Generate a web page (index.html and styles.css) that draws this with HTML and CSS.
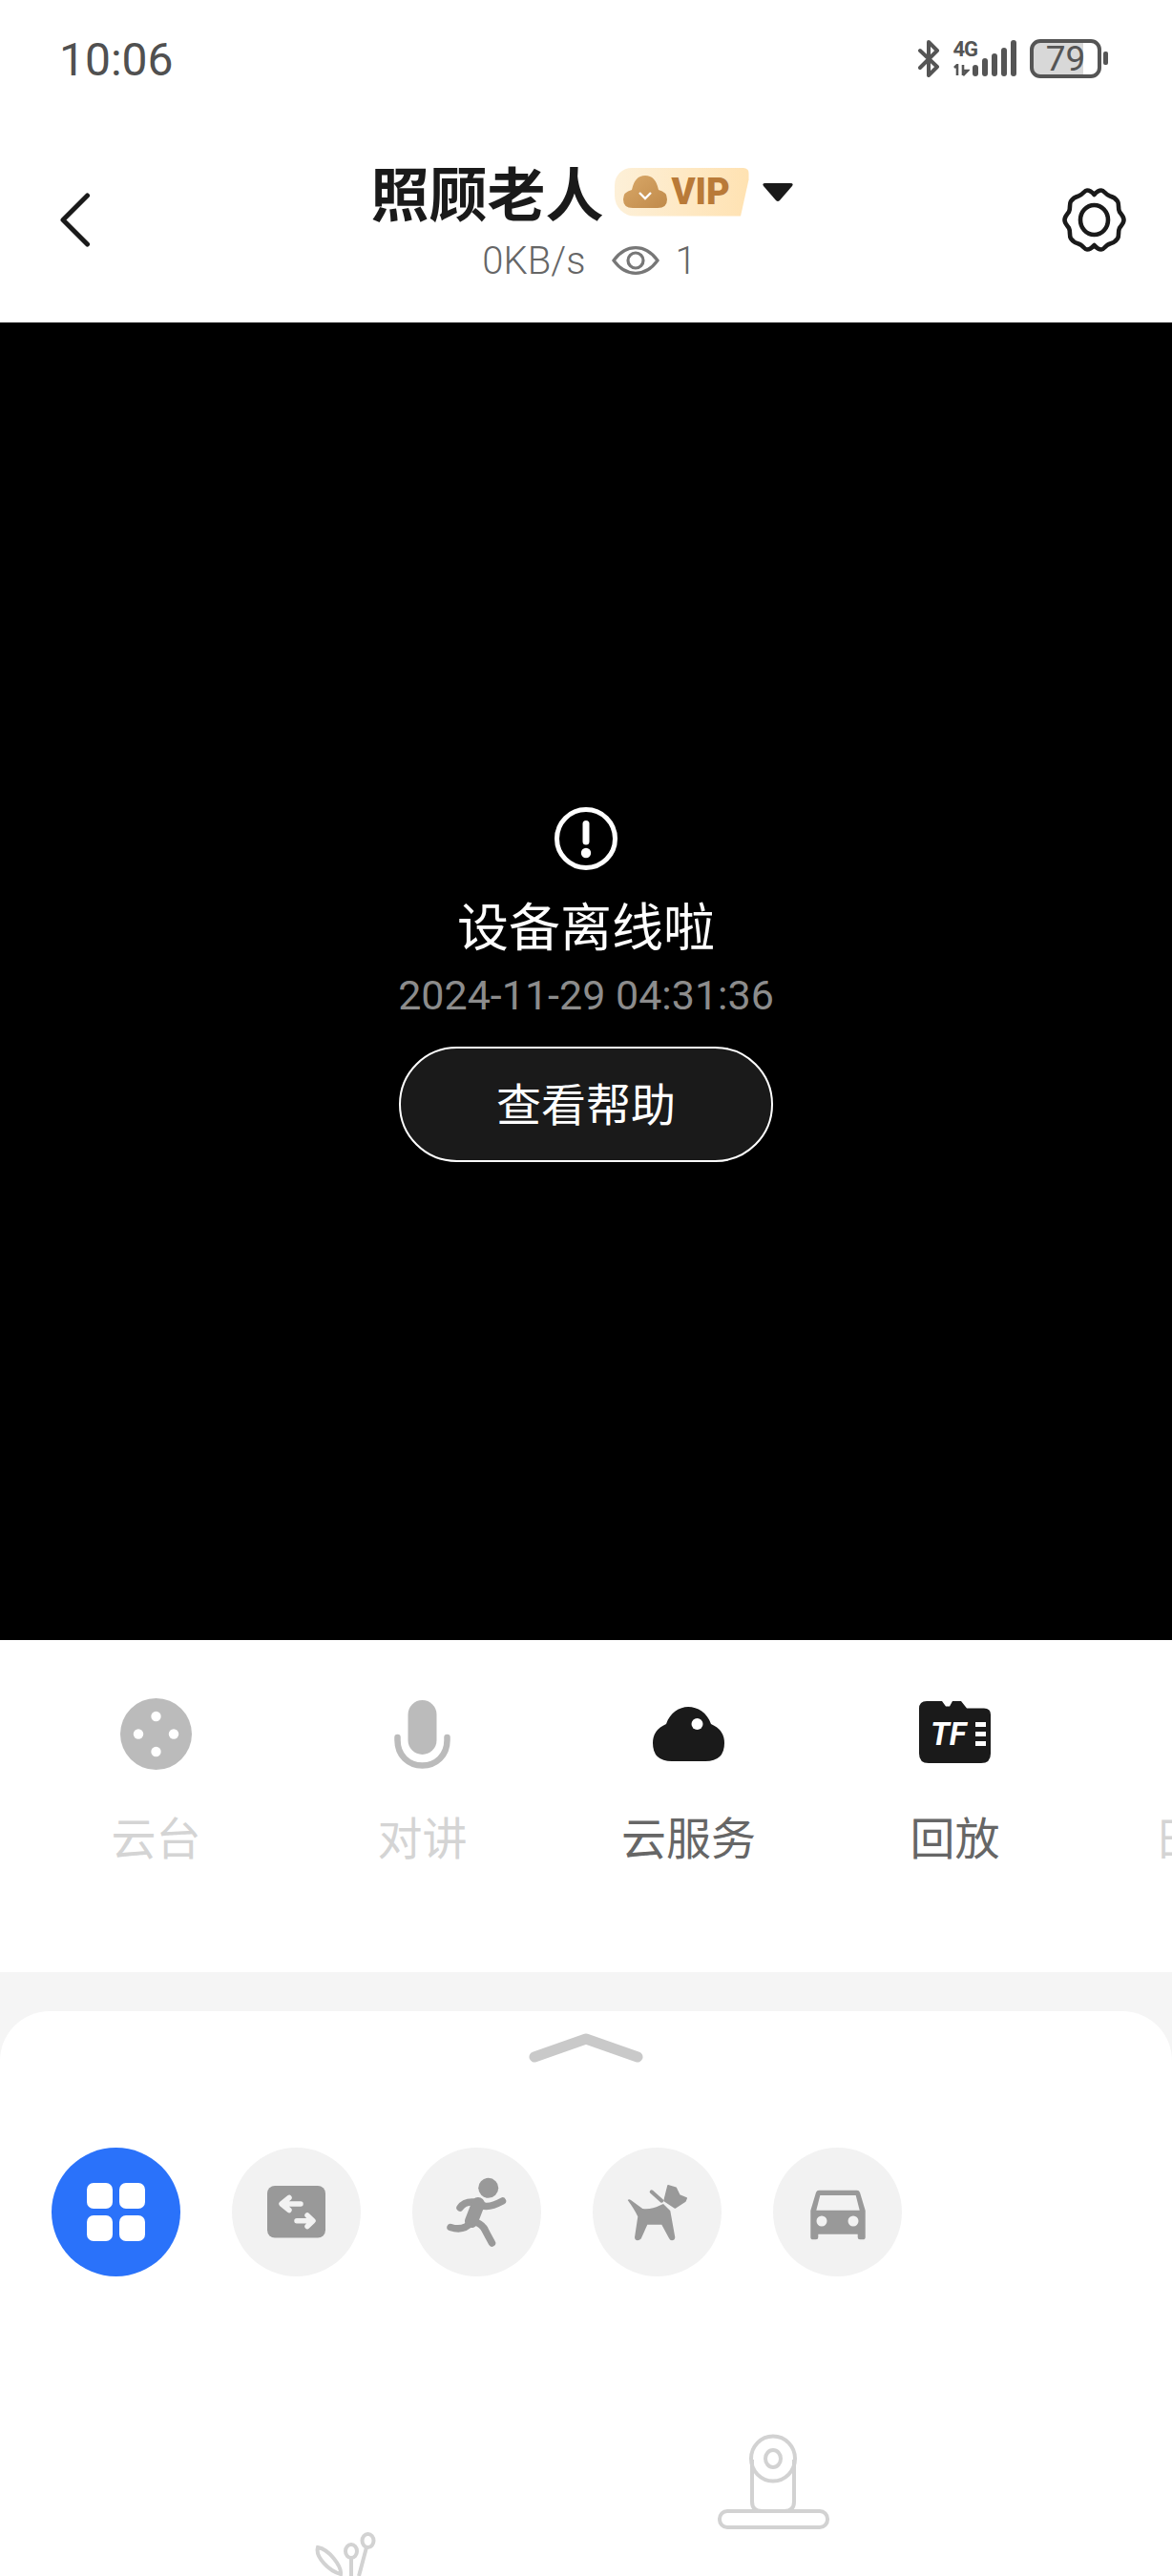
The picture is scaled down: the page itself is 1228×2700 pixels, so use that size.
FILE: index.html
```html
<!DOCTYPE html>
<html lang="zh-CN">
<head>
<meta charset="utf-8">
<title>照顾老人</title>
<link rel="stylesheet" href="styles.css">
</head>
<body>
<div class="page">
  <div class="status">
    <span class="time">10:06</span>
    <div class="status-right">
      <svg class="bt" viewBox="0 0 23 39"><path d="M2 11L20 28 11 37V2L20 11 2 29" fill="none" stroke="#555" stroke-width="4" stroke-linecap="round" stroke-linejoin="round"/></svg>
      <div class="net">
        <span class="net-label">4G</span>
        <svg class="arrows" viewBox="0 0 17 13"><path d="M1 4L4 1V12M10 1V12M10 12L15 7H10" fill="none" stroke="#555" stroke-width="2.6"/></svg>
      </div>
      <div class="bars">
        <i class="bar b1"></i><i class="bar b2"></i><i class="bar b3"></i><i class="bar b4"></i><i class="bar b5"></i>
      </div>
      <div class="battery"><span>79</span></div>
      <i class="nub"></i>
    </div>
  </div>

  <header class="nav">
    <svg class="back" viewBox="0 0 31 57"><path d="M28.5 3L3 28.5 28.5 54" fill="none" stroke="#1a1a1a" stroke-width="5" stroke-linecap="round" stroke-linejoin="round"/></svg>
    <div class="nav-center">
      <div class="title-row">
        <h1 class="title">照顾老人</h1>
        <div class="vip">
          <svg class="vip-cloud" viewBox="0 0 46 34"><defs><linearGradient id="vg" x1="0" y1="0" x2="1" y2="1"><stop offset="0" stop-color="#d9a868"/><stop offset="1" stop-color="#c08a4a"/></linearGradient></defs><path d="M10 34Q0 34 0 25 0 17 9 15 12 0 23 0 34 0 37 15 46 17 46 25 46 34 36 34Z" fill="url(#vg)"/><path d="M17 18L23 24 29 18" fill="none" stroke="#fff" stroke-width="2.4"/></svg>
          <span>VIP</span>
        </div>
        <svg class="caret" viewBox="0 0 32 19"><path d="M3 0H29Q33 0 31 3L18 18Q16 20 14 18L1 3Q-1 0 3 0Z" fill="#1a1a1a"/></svg>
      </div>
      <div class="sub-row">
        <span>0KB/s</span>
        <svg class="eye" viewBox="0 0 50 30"><path d="M2 15C10 4 18 1.7 25 1.7S40 4 48 15C40 26 32 28.3 25 28.3S10 26 2 15Z" fill="none" stroke="#777" stroke-width="3.2"/><circle cx="25" cy="15" r="8" fill="none" stroke="#777" stroke-width="3.2"/></svg>
        <span class="viewers">1</span>
      </div>
    </div>
    <svg class="gear" viewBox="0 0 67 67"><path d="M33.5 7C36 4 38 2.500 41 2.500C44 2.500 45 7 50 8.500C54 9.500 56 11 58 14C60 17 58 21 60 25C62 28 64.500 30 64.500 33.500C64.500 37 62 39 60 42C58 46 60 50 58 53C56 56 54 57.500 50 58.500C45 60 44 64.500 41 64.500C38 64.500 36 63 33.500 60C31 63 29 64.500 26 64.500C23 64.500 22 60 17 58.500C13 57.500 11 56 9 53C7 50 9 46 7 42C5 39 2.500 37 2.500 33.500C2.500 30 5 28 7 25C9 21 7 17 9 14C11 11 13 9.500 17 8.500C22 7 23 2.500 26 2.500C29 2.500 31 4 33.500 7Z" fill="none" stroke="#1a1a1a" stroke-width="4.6" stroke-linejoin="round"/><ellipse cx="33.500" cy="33.500" rx="14.500" ry="15.500" fill="none" stroke="#1a1a1a" stroke-width="4.600"/></svg>
  </header>

  <section class="video">
    <svg class="warn" viewBox="0 0 66 66"><circle cx="33" cy="33" r="30.500" fill="none" stroke="#fff" stroke-width="5"/><path d="M33 17.500V36" stroke="#fff" stroke-width="7" stroke-linecap="round"/><circle cx="33" cy="48" r="5.200" fill="#fff"/></svg>
    <div class="offline">设备离线啦</div>
    <div class="stamp">2024-11-29 04:31:36</div>
    <button class="help">查看帮助</button>
  </section>

  <nav class="tabs">
    <div class="tab off">
      <svg class="tab-icon" viewBox="0 0 75 75"><circle cx="37.500" cy="37.500" r="37.500" fill="#bbb"/><circle cx="37.500" cy="19" r="5.200" fill="#fff"/><circle cx="37.500" cy="56" r="5.200" fill="#fff"/><circle cx="19" cy="37.500" r="5.200" fill="#fff"/><circle cx="56" cy="37.500" r="5.200" fill="#fff"/></svg>
      <span>云台</span>
    </div>
    <div class="tab off">
      <svg class="tab-icon" viewBox="0 0 75 75"><rect x="22.500" y="2" width="30" height="57" rx="15" fill="#bbb"/><path d="M11.500 41V44C11.500 60 23 70.500 37.500 70.500S63.500 60 63.500 44V41" fill="none" stroke="#bbb" stroke-width="6.500" stroke-linecap="round"/></svg>
      <span>对讲</span>
    </div>
    <div class="tab">
      <svg class="tab-icon" viewBox="0 0 75 75"><path d="M20 66Q0 66 0 47 0 33 14 27C18 15 28 9 37 9 47 9 57 15 61 27Q75 33 75 47 75 66 55 66Z" fill="#1a1a1a"/><circle cx="46.500" cy="27" r="6" fill="#fff"/></svg>
      <span>云服务</span>
    </div>
    <div class="tab">
      <svg class="tab-icon" viewBox="0 0 75 75"><path d="M8 3H24L28 8.500H32L35 3H44L50 10.500H68Q75 10.500 75 17V58Q75 68 65 68H10Q0 68 0 58V11Q0 3 8 3Z" fill="#1a1a1a"/><text x="12" y="49" class="tf">TF</text><path d="M59 25H70V30H59ZM59 35H70V40H59ZM59 45H70V50H59Z" fill="#fff"/></svg>
      <span>回放</span>
    </div>
    <div class="tab off">
      <svg class="tab-icon" viewBox="0 0 75 75"><circle cx="37.500" cy="37.500" r="30" fill="#bbb"/></svg>
      <span>日历表</span>
    </div>
  </nav>

  <main class="band">
    <div class="sheet">
      <svg class="handle" viewBox="0 0 122 34"><path d="M7 27L61 8 115 27" fill="none" stroke="#c9c9c9" stroke-width="11" stroke-linecap="round" stroke-linejoin="round"/></svg>
      <div class="filters">
        <div class="filter active">
          <div class="grid-icon"><i></i><i></i><i></i><i></i></div>
        </div>
        <div class="filter">
          <svg viewBox="0 0 135 135"><rect x="37" y="40" width="61" height="54.500" rx="8" fill="#999"/><path d="M53 59H72M60 52.500L52 59 60 65.500M68 76.700H84M79 71L85 76.700 79 82.500" fill="none" stroke="#f2f2f2" stroke-width="5.500" stroke-linecap="round" stroke-linejoin="round"/></svg>
        </div>
        <div class="filter">
          <svg viewBox="0 0 135 135"><circle cx="79.700" cy="42.300" r="10.500" fill="#999"/><path d="M50 63Q55 55 69 57.500Q76 66 94.500 56" fill="none" stroke="#999" stroke-width="7.500" stroke-linecap="round" stroke-linejoin="round"/><path d="M69 59L62 77" fill="none" stroke="#999" stroke-width="14" stroke-linecap="round"/><path d="M62 78Q54 88 40 83.500" fill="none" stroke="#999" stroke-width="7.500" stroke-linecap="round"/><path d="M64 77Q74 80 77 88L83.500 100" fill="none" stroke="#999" stroke-width="7.500" stroke-linecap="round"/></svg>
        </div>
        <div class="filter">
          <svg viewBox="0 0 135 135"><path d="M36.700 55Q38 53.500 40 55L52.300 64Q62 65 70 60.700L74 59 81.300 66.300L86.300 94Q86 97.300 83 97.300 81 97.300 80 95L72.300 80.700H57.300L50.700 95.500Q49 97.300 47 97.300 44 97 44 94L47.300 72.300Q44 65 36.700 55Z" fill="#999"/><path d="M79 39.700L87.300 42.300 91 50 98.300 53 97 56 86.300 63 75 55.700Z" fill="#999" stroke="#999" stroke-width="1.500" stroke-linejoin="round"/><path d="M61.700 46.300L72.300 55.700" stroke="#999" stroke-width="4" stroke-linecap="round"/></svg>
        </div>
        <div class="filter">
          <svg viewBox="0 0 135 135"><path fill-rule="evenodd" d="M48 44.700H88Q90 44.700 91 47L96.700 66V94Q96.700 96.300 94 96.300H91Q88.700 96.300 88.700 94V90.700H47.300V94Q47.300 96.300 45 96.300H42Q39.300 96.300 39.300 94V66L45 47Q46 44.700 48 44.700ZM49.300 50L45.300 65.700H90.700L86.700 50ZM51 71.500A5.500 5.500 0 1 0 51 82.500 5.500 5.500 0 1 0 51 71.500ZM84 71.500A5.500 5.500 0 1 0 84 82.500 5.500 5.500 0 1 0 84 71.500Z" fill="#999"/></svg>
        </div>
      </div>
      <svg class="devices" viewBox="0 2540 1228 160">
        <g fill="none" stroke="#d2d2d2" stroke-width="4">
          <path d="M788 2578V2622Q788 2632 798 2632H822Q832 2632 832 2622V2578"/>
          <ellipse cx="810" cy="2577" rx="23" ry="23.500"/>
          <ellipse cx="810" cy="2577" rx="8" ry="9"/>
          <rect x="754" y="2632" width="113" height="17" rx="8"/>
          <ellipse cx="385.500" cy="2663" rx="6" ry="7"/>
          <path d="M384 2670L376 2700"/>
          <ellipse cx="368" cy="2674" rx="6" ry="7"/>
          <path d="M368 2681V2700"/>
          <path d="M333 2670C345 2672 358 2690 357 2698 345 2695 330 2680 333 2670Z"/>
        </g>
      </svg>
    </div>
  </main>
</div>
</body>
</html>
```

FILE: styles.css
```css
* { box-sizing: border-box; }
html, body { margin: 0; padding: 0; background: #fff; }
body { font-family: Roboto, "Noto Sans CJK SC", sans-serif; }
.page { width: 1228px; height: 2700px; overflow: hidden; display: flex; flex-direction: column; }

/* status bar */
.status { height: 122px; flex: none; display: flex; justify-content: space-between; align-items: center; padding: 0 67px 0 62px; }
.time { font-size: 48px; color: #505050; line-height: 1; margin-top: 3px; }
.status-right { display: flex; align-items: center; }
.bt { width: 23px; height: 39px; margin-right: 14px; }
.net { width: 20px; height: 38px; display: flex; flex-direction: column; justify-content: space-between; }
.net-label { font-size: 22px; line-height: 19px; font-weight: 700; color: #555; letter-spacing: -1px; white-space: nowrap; }
.arrows { width: 17px; height: 13px; }
.bars { display: flex; align-items: flex-end; gap: 3.5px; height: 38px; margin-right: 14px; }
.bar { display: block; width: 6.5px; background: #555; border-radius: 3px; }
.b1 { height: 12px; }
.b2 { height: 19px; }
.b3 { height: 24px; }
.b4 { height: 30px; }
.b5 { height: 38px; }
.battery { width: 75px; height: 41px; border: 4px solid #555; border-radius: 11px; background: linear-gradient(90deg, #d8d8d8 77%, #fff 77%); display: flex; align-items: center; justify-content: center; font-size: 37px; color: #555; line-height: 1; }
.nub { display: block; width: 5px; height: 14px; margin-left: 2px; background: #555; border-radius: 2px; }

/* nav */
.nav { height: 216px; flex: none; display: grid; grid-template-columns: 1fr auto 1fr; align-items: center; padding: 0 48px 0 63px; }
.back { width: 31px; height: 57px; }
.gear { width: 67px; height: 67px; justify-self: end; }
.nav-center { display: flex; flex-direction: column; align-items: center; margin-top: 6px; }
.title-row { display: flex; align-items: center; margin-right: 24px; height: 60px; }
.title { margin: 0; font-family: "Noto Sans CJK SC", sans-serif; font-size: 61px; line-height: 60px; font-weight: 700; color: #1a1a1a; }
.vip { width: 141px; height: 51px; margin-left: 11px; display: flex; align-items: center; padding-left: 9px; gap: 5px; background: linear-gradient(90deg, #fdf0d8, #ffe2b2); border-radius: 18px 6px 10px 22px; clip-path: polygon(0 0, 100% 0, 100% 25%, 94% 100%, 0 100%); font-size: 38px; font-weight: 900; color: #b97a38; }
.vip-cloud { width: 46px; height: 34px; flex: none; }
.caret { width: 32px; height: 19px; margin-left: 14px; }
.sub-row { display: flex; align-items: center; height: 44px; margin: 20px 8px 0 0; font-size: 40px; font-weight: 300; color: #666; }
.eye { width: 50px; height: 30px; margin-left: 28px; }
.viewers { margin-left: 16px; }

/* video */
.video { height: 1381px; flex: none; background: #000; display: flex; flex-direction: column; align-items: center; padding-top: 508px; }
.warn { width: 66px; height: 66px; }
.offline { margin-top: 27px; font-family: "Noto Sans CJK SC", sans-serif; font-size: 54px; line-height: 60px; color: #fff; }
.stamp { margin-top: 19px; font-size: 43px; line-height: 50px; color: #8c8c8c; }
.help { width: 392px; height: 121px; margin-top: 29px; border: 2px solid #fff; border-radius: 61px; background: #1a1a1a; color: #fff; font-family: "Noto Sans CJK SC", sans-serif; font-size: 47px; padding: 0 0 6px; }

/* tabs */
.tabs { height: 348px; flex: none; display: flex; padding: 61px 0 0 24px; overflow: hidden; }
.tab { flex: 0 0 279px; display: flex; flex-direction: column; align-items: center; font-family: "Noto Sans CJK SC", sans-serif; font-size: 47px; line-height: 60px; color: #666; }
.tab span { margin-top: 39px; }
.tab.off { color: #d4d4d4; }
.tab-icon { width: 75px; height: 75px; flex: none; }
.tf { font-family: Roboto, sans-serif; font-weight: 700; font-style: italic; font-size: 33px; fill: #fff; }

/* lower sheet */
.band { flex: 1; background: #f5f5f5; padding-top: 41px; display: flex; }
.sheet { flex: 1; background: #fff; border-radius: 52px 52px 0 0; display: flex; flex-direction: column; align-items: stretch; padding-top: 21px; }
.handle { width: 122px; height: 34px; align-self: center; }
.filters { display: flex; gap: 54px; padding-left: 54px; margin-top: 88px; }
.filter { width: 135px; height: 135px; border-radius: 50%; background: #f2f2f2; display: flex; align-items: center; justify-content: center; }
.filter svg { width: 135px; height: 135px; display: block; }
.filter.active { background: #2a72fa; }
.grid-icon { width: 61px; height: 61px; display: grid; grid-template-columns: 27px 27px; grid-template-rows: 27px 27px; gap: 7px; }
.grid-icon i { display: block; background: #fff; border-radius: 7px; }
.devices { width: 1228px; height: 160px; display: block; margin-top: 154px; flex: none; }
```
